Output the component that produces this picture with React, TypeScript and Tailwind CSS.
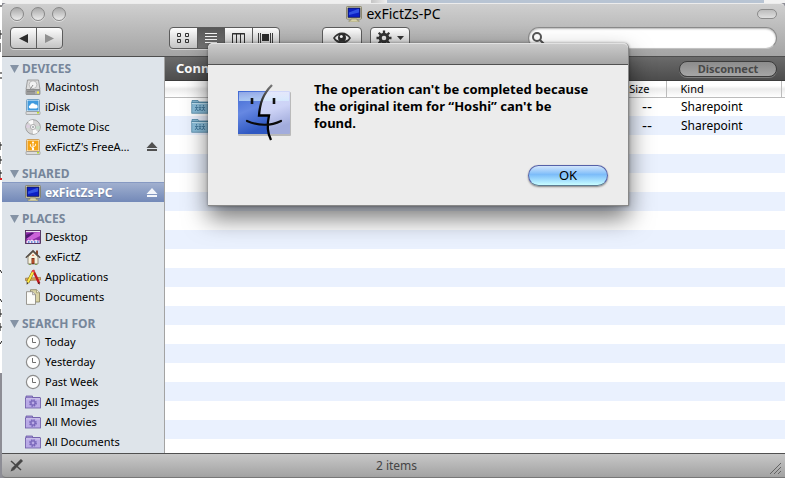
import React from 'react';

const HardDiskIcon = () => (
  <svg width="16" height="16" viewBox="0 0 16 16" aria-hidden="true">
    <path d="M2.5 1h11L15 10.500H1z" fill="#dcdcdc" stroke="#8b8b8b" strokeWidth=".8" />
    <circle cx="8" cy="5.700" r="3.900" fill="#f2f2f2" stroke="#a6a6a6" strokeWidth=".7" />
    <path d="M8 6l-3 4.500" stroke="#8d8d8d" />
    <rect x="1" y="11" width="14" height="4.500" rx=".5" fill="#b0b0b0" stroke="#707070" strokeWidth=".6" />
    <path d="M2 12.500h8M2 14h8" stroke="#6a6a6a" strokeWidth=".6" />
    <rect x="12" y="12.500" width="2" height="2" fill="#f6f03c" />
  </svg>
);

const DriveIcon = ({ color, edge, children }: { color: string; edge: string; children: React.ReactNode }) => (
  <svg width="16" height="16" viewBox="0 0 16 16" aria-hidden="true">
    <rect x="1.500" y=".5" width="13" height="12" rx="1" fill="#f4f4f4" stroke={edge} strokeWidth=".8" />
    <rect x="2.500" y="1.500" width="11" height="10" fill={color} />
    {children}
    <rect x="1" y="12.500" width="14" height="3" rx=".5" fill="#dcdcdc" stroke="#8a8a8a" strokeWidth=".6" />
    <rect x="12" y="13" width="2" height="1.500" fill="#b8e02c" />
  </svg>
);

const IDiskIcon = () => (
  <DriveIcon color="#3f9ade" edge="#5b8fb8">
    <path d="M5 9.500a1.700 1.700 0 0 1 .2-3.300A2.600 2.600 0 0 1 10 5.600a2 2 0 0 1 1.300 3.900z" fill="#fff" />
  </DriveIcon>
);

const UsbDriveIcon = () => (
  <DriveIcon color="#f6a313" edge="#c98a2e">
    <path d="M8 10.500V3M8 9L5.400 7.300V5.200M8 8l2.600-1.400V4.800" stroke="#fff" fill="none" strokeWidth=".9" />
    <circle cx="8" cy="10" r="1.200" fill="#fff" />
    <path d="M6.800 4L8 2l1.200 2z" fill="#fff" />
  </DriveIcon>
);

const DiscIcon = () => (
  <svg width="16" height="16" viewBox="0 0 16 16" aria-hidden="true">
    <circle cx="8" cy="8" r="7.300" fill="#d4d4d4" stroke="#8f8f8f" strokeWidth=".8" />
    <path d="M8 8L3 2.800A7 7 0 0 1 8 1zM8 8l5 5.200A7 7 0 0 1 8 15z" fill="#fafafa" />
    <path d="M8 8l6.800-1a7 7 0 0 1-.6 4z" fill="#c3dccb" />
    <path d="M8 8L1.200 9a7 7 0 0 1 .6-4z" fill="#dccfe0" />
    <circle cx="8" cy="8" r="2.600" fill="#f2f2f2" stroke="#9b9b9b" strokeWidth=".7" />
    <circle cx="8" cy="8" r="1" fill="#9ea3a9" />
  </svg>
);

const ComputerIcon = () => (
  <svg width="16" height="16" viewBox="0 0 16 16" aria-hidden="true">
    <rect x=".5" y=".5" width="15" height="12.500" rx=".8" fill="#ece7bf" stroke="#77735a" strokeWidth=".8" />
    <rect x="2" y="2" width="12" height="9.300" fill="#0b1fc4" stroke="#101548" strokeWidth=".8" />
    <path d="M3 6.500L12 3h1v3.400L3 9z" fill="#3e63ee" opacity=".75" />
    <path d="M5 13h6v1.300h2V16H3v-1.700h2z" fill="#d8d3a8" stroke="#77735a" strokeWidth=".5" />
  </svg>
);

const DesktopIcon = () => (
  <svg width="16" height="16" viewBox="0 0 16 16" aria-hidden="true">
    <rect x=".5" y="1.500" width="15" height="13" fill="#8b2aa5" stroke="#43294f" strokeWidth=".8" />
    <rect x="1" y="2" width="14" height="1.200" fill="#ece5f0" />
    <path d="M1 10L9 4l6-1v4l-8 4z" fill="#cb62d8" />
    <path d="M1 6l6-2.500 2 .4L1 10z" fill="#521575" />
    <path d="M1.500 14v-2l2-1.500 1.500 1 2-1 2 1.200 2-1.200 2 1.200 1.500-.7v3z" fill="#eee0f4" />
    <path d="M3 13h1.500M6 13h1.500M9 13h1.500M12 13h1.500" stroke="#477fd6" strokeWidth="1.500" />
  </svg>
);

const HomeIcon = () => (
  <svg width="16" height="16" viewBox="0 0 16 16" aria-hidden="true">
    <rect x="11" y="1.500" width="2" height="4" fill="#8d4a2c" />
    <path d="M3 8v7h10V8L8 3z" fill="#f7f1dc" stroke="#6c6250" strokeWidth=".7" />
    <path d="M.8 8.700L8 1.700l7.200 7" fill="none" stroke="#4f463c" strokeWidth="1.300" />
    <path d="M8 5.200l1.300 1.600H6.700z" fill="#d14a22" />
    <rect x="6.500" y="9" width="3" height="6" fill="#7d3420" />
    <path d="M7.500 10h1v4h-1z" fill="#e8602a" />
    <path d="M4 15.300h2M10 15.300h2" stroke="#6d9b3d" />
  </svg>
);

const ApplicationsIcon = () => (
  <svg width="16" height="16" viewBox="0 0 16 16" aria-hidden="true">
    <path d="M.5 9.200l15-.8V11l-15 .5z" fill="#d8a961" stroke="#8f6124" strokeWidth=".6" />
    <path d="M8 1l6.300 13.500" stroke="#c2181f" strokeWidth="2.400" />
    <path d="M14 13l1 2.700-2.400-1.500z" fill="#4b1a15" />
    <path d="M8.500 2L2.700 13.500" stroke="#7c6a11" strokeWidth="3" />
    <path d="M8.500 2L2.700 13.500" stroke="#ffe845" strokeWidth="2" />
    <path d="M7.600 1l2.200 1-.9 1.800-2.200-1z" fill="#ee4554" />
    <path d="M1.700 13l1.900 1-1.900 1.800z" fill="#3b2a10" />
  </svg>
);

const DocumentsIcon = () => (
  <svg width="16" height="16" viewBox="0 0 16 16" aria-hidden="true">
    <path d="M5.500.7h6l3 3V13h-9z" fill="#d8d2a4" stroke="#85805e" strokeWidth=".8" />
    <path d="M11.500.7v3h3" fill="#f4f1d6" stroke="#85805e" strokeWidth=".6" />
    <path d="M1.500 2.700h6l3 3v9.700h-9z" fill="#fbfbf8" stroke="#85827a" strokeWidth=".8" />
    <path d="M7.500 2.700v3h3" fill="#dedede" stroke="#85827a" strokeWidth=".6" />
  </svg>
);

const ClockIcon = () => (
  <svg width="16" height="16" viewBox="0 0 16 16" aria-hidden="true">
    <circle cx="8" cy="8" r="6.600" fill="#fdfdfd" stroke="#8d8d8d" strokeWidth="1.200" />
    <path d="M7.500 4v4.500H11" fill="none" stroke="#6f6f6f" />
  </svg>
);

const SmartFolderIcon = () => (
  <svg width="16" height="16" viewBox="0 0 16 16" aria-hidden="true">
    <path d="M1 4V2h6.500v1.500H15V5H1z" fill="#a494d6" stroke="#6a58a5" strokeWidth=".8" />
    <rect x=".5" y="4" width="15" height="10" fill="#b9aae6" stroke="#6a58a5" strokeWidth=".8" />
    <path d="M1 4.800h14" stroke="#dcd4f6" />
    <circle cx="8" cy="9" r="3" fill="none" stroke="#7967ba" strokeWidth="1.800" strokeDasharray="1.500 .86" />
    <circle cx="8" cy="9" r="2" fill="none" stroke="#7967ba" strokeWidth="1.200" />
  </svg>
);

const SharedFolderIcon = () => (
  <svg width="18" height="16" viewBox="0 0 18 16" aria-hidden="true">
    <path d="M1 4V1.500h6L8 3h9v1z" fill="#86b9d4" stroke="#4f86a5" strokeWidth=".8" />
    <rect x=".8" y="3.500" width="16.400" height="10.700" fill="#8dc0dc" stroke="#4f86a5" strokeWidth=".8" />
    <path d="M1 4.500h16" stroke="#bfe0f0" />
    <path d="M5.500 6v1.500M9 6v1.500M12.500 6v1.500M4 8.500h3M7.500 8.500h3M11 8.500h3M5.500 8v3M9 8v3M12.500 8v3M4 12l1.500-2L7 12M7.500 12L9 10l1.500 2M11 12l1.500-2 1.500 2" fill="none" stroke="#4a81a4" />
  </svg>
);

const EjectIcon = ({ color }: { color: string }) => (
  <svg width="12" height="10" viewBox="0 0 12 10" aria-hidden="true">
    <path d="M6 0l5.500 6H.5z" fill={color} />
    <rect x="1" y="7" width="10" height="2" fill={color} />
  </svg>
);

const FinderIcon = () => (
  <svg width="64" height="64" viewBox="0 0 64 64" className="shrink-0" role="img" aria-label="Finder">
    <defs>
      <linearGradient id="faceLeft" x1="0" y1="0" x2=".3" y2="1">
        <stop offset="0" stopColor="#3f68d3" />
        <stop offset=".5" stopColor="#6688e2" />
        <stop offset="1" stopColor="#2f58c2" />
      </linearGradient>
      <linearGradient id="faceRight" x1="0" y1="0" x2=".4" y2="1">
        <stop offset="0" stopColor="#d5dcfb" />
        <stop offset=".6" stopColor="#cdd3f6" />
        <stop offset="1" stopColor="#a2acdc" />
      </linearGradient>
      <linearGradient id="faceGloss" x1="0" y1="0" x2="0" y2="1">
        <stop offset="0" stopColor="#fff" stopOpacity=".4" />
        <stop offset="1" stopColor="#d7f2ff" stopOpacity=".65" />
      </linearGradient>
      <linearGradient id="noseInk" x1="0" y1="0" x2="0" y2="1">
        <stop offset="0" stopColor="#777" />
        <stop offset=".35" stopColor="#222" />
        <stop offset=".5" stopColor="#000" />
      </linearGradient>
    </defs>
    <rect x="6" y="11" width="53" height="44" rx="1" fill="#9a9a9a" opacity=".6" />
    <rect x="6" y="10" width="52" height="43" rx="1" fill="url(#faceRight)" />
    <path d="M6 10h30c-6 7-8 14-9 25h10c-1 7-1 12 0 18H6z" fill="url(#faceLeft)" />
    <rect x="7" y="11" width="50" height="9" fill="url(#faceGloss)" />
    <path d="M20 17v6M42 17v6" stroke="#111" strokeWidth="2.600" />
    <path d="M40 4C31 13 28 22 27 34.500h10c-2 9-2 17 2 24.500" fill="none" stroke="url(#noseInk)" strokeWidth="2.300" />
    <path d="M15 40c11 5 24 5 34 0" fill="none" stroke="#0a0a0a" strokeWidth="2.200" strokeLinecap="round" />
  </svg>
);

const sections = [
  {
    title: 'DEVICES',
    items: [
      { label: 'Macintosh', icon: <HardDiskIcon /> },
      { label: 'iDisk', icon: <IDiskIcon /> },
      { label: 'Remote Disc', icon: <DiscIcon /> },
      { label: "exFictZ's FreeA…", icon: <UsbDriveIcon />, eject: true },
    ],
  },
  {
    title: 'SHARED',
    items: [{ label: 'exFictZs-PC', icon: <ComputerIcon />, eject: true, selected: true }],
  },
  {
    title: 'PLACES',
    items: [
      { label: 'Desktop', icon: <DesktopIcon /> },
      { label: 'exFictZ', icon: <HomeIcon /> },
      { label: 'Applications', icon: <ApplicationsIcon /> },
      { label: 'Documents', icon: <DocumentsIcon /> },
    ],
  },
  {
    title: 'SEARCH FOR',
    items: [
      { label: 'Today', icon: <ClockIcon /> },
      { label: 'Yesterday', icon: <ClockIcon /> },
      { label: 'Past Week', icon: <ClockIcon /> },
      { label: 'All Images', icon: <SmartFolderIcon /> },
      { label: 'All Movies', icon: <SmartFolderIcon /> },
      { label: 'All Documents', icon: <SmartFolderIcon /> },
    ],
  },
];

type SidebarItem = { label: string; icon: React.ReactNode; eject?: boolean; selected?: boolean };

const SidebarRow = ({ label, icon, eject, selected }: SidebarItem) => (
  <li
    className={
      selected
        ? 'flex h-5 items-center border-t border-[#8699c2] bg-linear-to-b from-[#a1b0cf] to-[#7389b8] pr-1.5 pl-[23px] text-[12px] font-bold text-white text-shadow-xs'
        : 'flex h-5 items-center pr-1.5 pl-[23px]'
    }
  >
    <a href="#" className="flex min-w-0 flex-1 items-center gap-1 whitespace-nowrap">
      {icon}
      {label}
    </a>
    {eject && (
      <button aria-label={`Eject ${label}`}>
        <EjectIcon color={selected ? '#f3f5fa' : '#505050'} />
      </button>
    )}
  </li>
);

const Sidebar = () => (
  <nav className="w-[163px] shrink-0 border-r border-[#a3a3a3] bg-[#dee4ea] pt-1">
    {sections.map((section) => (
      <section key={section.title} className="mb-[9px]">
        <h2 className="flex h-4 items-center gap-[3px] pl-2 text-[12px] font-bold text-[#77869a]">
          <svg width="9" height="8" viewBox="0 0 9 8" aria-hidden="true">
            <path d="M0 0h9L4.500 8z" fill="#8593a5" />
          </svg>
          {section.title}
        </h2>
        <ul>
          {section.items.map((item) => (
            <SidebarRow key={item.label} {...item} />
          ))}
        </ul>
      </section>
    ))}
  </nav>
);

const group = 'flex h-[22px] divide-x divide-[#5c5c5c] overflow-hidden rounded-[4px] border border-[#5c5c5c] bg-linear-to-b from-[#fdfdfd] to-[#c4c4c4] shadow-[0_1px_0_#d4d4d4]';
const segment = 'flex flex-1 items-center justify-center';

const Toolbar = () => (
  <div className="flex h-[22px] px-2">
    <div className={`${group} w-[53px]`}>
      <button aria-label="Back" className={segment}>
        <svg width="9" height="9" viewBox="0 0 9 9"><path d="M9 0v9L0 4.500z" fill="#2b2b2b" /></svg>
      </button>
      <button aria-label="Forward" className={segment}>
        <svg width="9" height="9" viewBox="0 0 9 9"><path d="M0 0v9l9-4.500z" fill="#909090" /></svg>
      </button>
    </div>
    <div className={`${group} ml-[106px] w-[111px]`}>
      <button aria-label="Icon view" className={segment}>
        <svg width="12" height="10" viewBox="0 0 12 10" fill="none" stroke="#303030">
          <path d="M.5.500h3v3h-3zM8.500.500h3v3h-3zM.5 6.500h3v3h-3zM8.500 6.500h3v3h-3z" />
        </svg>
      </button>
      <button aria-label="List view" aria-pressed="true" className="flex flex-1 items-center justify-center bg-linear-to-b from-[#585858] to-[#747474]">
        <svg width="12" height="10" viewBox="0 0 12 10" stroke="#f5f5f5">
          <path d="M0 .5h12M0 3.500h12M0 6.500h12M0 9.500h12" />
        </svg>
      </button>
      <button aria-label="Column view" className={segment}>
        <svg width="13" height="11" viewBox="0 0 13 11" fill="none" stroke="#303030">
          <path d="M.5.500h12v10H.5zM4.500.500v10M8.500.500v10M0 1h13" />
        </svg>
      </button>
      <button aria-label="Cover Flow" className={segment}>
        <svg width="15" height="10" viewBox="0 0 15 10">
          <path d="M.5 0v10M2.500 0v10M12.500 0v10M14.500 0v10" stroke="#3c3c3c" />
          <rect x="4" y="1" width="7" height="7" fill="#2c2c2c" />
        </svg>
      </button>
    </div>
    <div className={`${group} ml-[42px] w-10`}>
      <button aria-label="Quick Look" className={segment}>
        <svg width="18" height="12" viewBox="0 0 18 12">
          <path d="M0 6C4-1.500 14-1.500 18 6 14 13.500 4 13.500 0 6z" fill="#333" />
          <path d="M2 6C5 1.800 13 1.800 16 6 13 10.200 5 10.200 2 6z" fill="#eee" />
          <circle cx="9" cy="5.700" r="4" fill="#2c2c2c" />
          <circle cx="8.300" cy="4.500" r="1.500" fill="#f4f4f4" />
        </svg>
      </button>
    </div>
    <div className={`${group} ml-2 w-10`}>
      <button aria-label="Action" className="flex flex-1 items-center justify-center gap-[5px]">
        <svg width="16" height="16" viewBox="0 0 16 16">
          <circle cx="8" cy="8" r="3.800" fill="none" stroke="#333" strokeWidth="3" />
          <path d="M8 .5v3M8 12.500v3M.5 8h3M12.500 8h3M2.700 2.700l2 2M11.300 11.300l2 2M2.700 13.300l2-2M11.300 4.700l2-2" stroke="#333" strokeWidth="2.300" />
        </svg>
        <svg width="7" height="4" viewBox="0 0 7 4"><path d="M0 0h7L3.500 4z" fill="#333" /></svg>
      </button>
    </div>
    <label className="ml-auto flex h-[22px] w-[249px] items-center rounded-full border border-[#8a8a8a] border-b-[#c2c2c2] bg-white pl-[3px] shadow-[inset_0_1px_2px_#b5b5b5]">
      <svg width="13" height="13" viewBox="0 0 13 13" fill="none" stroke="#555" strokeWidth="2">
        <circle cx="5" cy="5" r="4" />
        <path d="M8 8l4.500 4.500" />
      </svg>
      <input type="search" aria-label="Search" className="min-w-0 flex-1 bg-transparent px-1 outline-none" />
    </label>
  </div>
);

const trafficLight = 'size-[14px] rounded-full border border-[#878787] bg-linear-to-b from-[#a9a9a9] to-[#ececec] shadow-[0_1px_0_#dedede]';

const WindowHeader = () => (
  <header className="h-[54px] shrink-0 rounded-t-[5px] border-t border-b border-t-[#ececec] border-b-[#4e4e4e] bg-linear-to-b from-[#cfcfcf] to-[#a4a4a4]">
    <div className="flex h-[23px] items-center px-2 pb-1">
      <div className="flex flex-1 gap-[7px]">
        <button aria-label="Close" className={trafficLight} />
        <button aria-label="Minimize" className={trafficLight} />
        <button aria-label="Zoom" className={trafficLight} />
      </div>
      <h1 className="flex items-center gap-1 text-[14px] leading-4">
        <ComputerIcon />
        exFictZs-PC
      </h1>
      <div className="flex flex-1 justify-end">
        <button aria-label="Toggle toolbar" className="h-[10px] w-5 rounded-full border border-[#8b8b8b] bg-linear-to-b from-[#bcbcbc] to-[#e0e0e0]" />
      </div>
    </div>
    <Toolbar />
  </header>
);

const FileList = () => (
  <main className="flex min-w-0 flex-1 flex-col">
    <div className="flex h-6 shrink-0 items-center justify-between border-b border-[#3d3d3d] bg-linear-to-b from-[#6b6b6b] to-[#4d4d4d] pr-2 pl-[11px] text-white">
      <span className="text-[13px] font-bold">Connected</span>
      <button className="h-4 w-[98px] rounded-full border border-[#3c3c3c] bg-linear-to-b from-[#8c8c8c] to-[#a6a6a6] text-[11px] leading-[14px] font-bold text-[#484848] shadow-[0_1px_0_#7d7d7d]">
        Disconnect
      </button>
    </div>
    <div className="flex-1 bg-[repeating-linear-gradient(#fff_0_19px,#eaf1fe_19px_38px)] bg-[position:0_16px]">
      <table className="w-full table-fixed border-collapse text-left text-[12px] leading-[14px]">
        <thead className="bg-linear-to-b from-white from-30% via-[#ececec] via-50% to-white text-[11px]">
          <tr className="h-4 border-b border-[#bcbcbc]">
            <th aria-label="Name" className="p-0" />
            <th className="w-[66px] border-r border-[#bcbcbc] p-0 pr-4 text-right font-normal">Size</th>
            <th className="w-[115px] border-r border-[#bcbcbc] p-0 pl-[14px] font-normal">Kind</th>
            <th aria-label="More columns" className="w-1 p-0" />
          </tr>
        </thead>
        <tbody>
          {[1, 2].map((id) => (
            <tr key={id} className="h-[19px]">
              <td className="p-0 pl-[26px]"><SharedFolderIcon /></td>
              <td className="p-0 pr-[14px] text-right font-['DejaVu_Sans',sans-serif] text-[14px]">--</td>
              <td className="p-0 pl-[15px]">Sharepoint</td>
              <td className="p-0" />
            </tr>
          ))}
        </tbody>
      </table>
    </div>
  </main>
);

const StatusBar = () => (
  <footer className="flex h-[25px] shrink-0 items-center justify-between rounded-bl-[4px] border-t border-b border-t-[#505050] border-b-[#777] bg-linear-to-b from-[#c8c8c8] to-[#a2a2a2] pr-1 pl-2 text-[12px] text-[#454545]">
    <svg width="13" height="13" viewBox="0 0 13 13" aria-hidden="true">
      <path d="M1 2l10 9" stroke="#474747" strokeWidth="1.500" />
      <path d="M12 1L3 10" stroke="#474747" strokeWidth="3" />
      <path d="M2 8.500L.5 12.500l4-1.500z" fill="#474747" />
    </svg>
    <span>2 items</span>
    <svg width="11" height="11" viewBox="0 0 11 11" className="mb-[3px] self-end" aria-hidden="true">
      <path d="M0 11L11 0M4 11l7-7M8 11l3-3" stroke="#636363" />
    </svg>
  </footer>
);

const AlertDialog = () => (
  <div
    role="alertdialog"
    aria-labelledby="alert-message"
    className="absolute top-[43px] left-[208px] w-[421px] rounded-t-[5px] border-r border-b border-[#888] bg-[#ececec] shadow-[0_12px_24px_rgba(0,0,0,0.55),0_0_3px_rgba(0,0,0,0.4)]"
  >
    <div className="h-[22px] rounded-t-[5px] border-t border-b border-t-[#e2e2e2] border-b-[#515151] bg-linear-to-b from-[#cbcbcb] to-[#a6a6a6]" />
    <div className="flex gap-[18px] px-6 pt-4">
      <FinderIcon />
      <p id="alert-message" className="w-[280px] text-[13px] leading-[17px] font-bold">
        The operation can't be completed because the original item for “Hoshi” can't be found.
      </p>
    </div>
    <div className="flex justify-end px-5 pt-5 pb-[19px]">
      <button className="h-[21px] w-20 rounded-full border border-[#5661a8] border-b-[#5d7c92] bg-linear-to-b from-[#d2e5fb] from-0% via-[#7cbcf9] via-45% to-[#c8fdff] text-[13px] leading-[19px] shadow-[0_1px_2px_rgba(0,0,0,0.45)]">
        OK
      </button>
    </div>
  </div>
);

// slivers of the windows that sit behind this one
const BackgroundEdge = () => (
  <svg width="2" height="478" viewBox="0 0 2 478" className="block" aria-hidden="true">
    <rect width="2" height="373" fill="#fff" />
    <rect y="373" width="2" height="105" fill="#8d8d95" />
    <path d="M0 6h2M0 30v9M0 34h2M0 43v9M0 73h2M0 78h2M0 142v8M0 145h2M0 156v8M0 160h2M0 170v8M0 173h2M0 270l2 3M0 299l2 3M0 309v8M0 314h2M0 323v8M0 327h2M0 344l2-3" stroke="#111" />
    <rect y="178" width="2" height="2" fill="#d22" />
  </svg>
);

export default function App() {
  return (
    <div className="relative flex h-screen overflow-hidden bg-white font-['Noto_Sans','Open_Sans',sans-serif] text-[11px] text-black">
      <BackgroundEdge />
      <div className="flex min-w-0 flex-1 flex-col bg-[#8d8d95]">
        <div className="flex h-[3px] shrink-0 bg-white">
          <div className="w-[369px] bg-[#efefef]" />
          <div className="w-4 bg-linear-to-r from-[#c5c5c5] to-[#efefef]" />
          <div className="flex-1 bg-[#b8c4d3]" />
          <div className="w-[21px] bg-[#f2f2f2]" />
        </div>
        <WindowHeader />
        <div className="flex min-h-0 flex-1">
          <Sidebar />
          <FileList />
        </div>
        <StatusBar />
      </div>
      <AlertDialog />
    </div>
  );
}
